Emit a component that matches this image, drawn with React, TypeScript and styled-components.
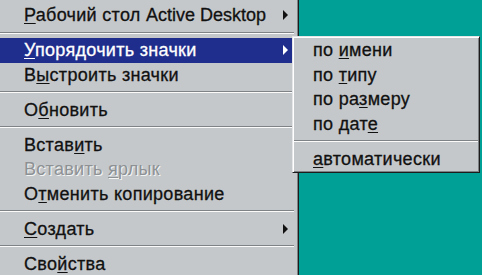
import { Fragment } from 'react'
import styled, { createGlobalStyle } from 'styled-components'

const GlobalStyle = createGlobalStyle`
  html, body {
    margin: 0;
    padding: 0;
    background: #00a096;
    overflow: hidden;
  }
`

const Desktop = styled.div`
  position: relative;
  width: 482px;
  height: 275px;
  overflow: hidden;
  background: #00a096;
  font-family: 'Liberation Sans', Arial, sans-serif;
  font-size: 18px;
  letter-spacing: 0.3px;
  color: #111111;
`

const MainMenu = styled.div`
  display: flex;
  flex-direction: column;
  width: 294px;
  margin-left: -4px;
  padding: 3px 4px 0 4px;
  box-sizing: content-box;
  background: #c5c8ca;
  border-right: 1px solid #1c1c1c;
  box-shadow: inset -1px 0 0 #7e8184;
  min-height: 290px;
`

const SubMenu = styled.div`
  position: absolute;
  left: 292px;
  top: 36px;
  width: 184px;
  display: flex;
  flex-direction: column;
  background: #c5c8ca;
  border-top: 1px solid #e4e6e7;
  border-left: 1px solid #e4e6e7;
  border-right: 1px solid #1c1c1c;
  border-bottom: 1px solid #1c1c1c;
  box-shadow: inset 1px 1px 0 #ffffff, inset -1px -1px 0 #7e8184;
  padding: 1px;
`

const Row = styled.div<{ active?: boolean; disabled?: boolean; indent: number }>`
  display: flex;
  align-items: center;
  height: 24.5px;
  padding-left: ${({ indent }) => indent}px;
  padding-right: 3px;
  white-space: nowrap;
  background: ${({ active }) => (active ? '#1f2e8c' : 'transparent')};
  color: ${({ active, disabled }) => (active ? '#ffffff' : disabled ? '#8d9194' : '#111111')};
  text-shadow: ${({ disabled }) => (disabled ? '1px 1px 0 #f4f5f5' : 'none')};
  -webkit-text-stroke: ${({ disabled }) => (disabled ? '0' : '0.3px currentColor')};
`

const Label = styled.span`
  flex: 1;
  line-height: 1;
`

// latin words run a bit narrower than the cyrillic in the original font
const Latin = styled.span`
  letter-spacing: 0;
`

const Key = styled.span`
  text-decoration: underline;
  text-underline-offset: 2px;
  text-decoration-thickness: 1px;
`

const Arrow = styled.span<{ active?: boolean }>`
  width: 0;
  height: 0;
  margin-right: 3px;
  border-top: 5px solid transparent;
  border-bottom: 5px solid transparent;
  border-left: 5px solid ${({ active }) => (active ? '#ffffff' : '#111111')};
`

const Separator = styled.div`
  height: 10.5px;
  padding-top: 4px;
  box-sizing: border-box;

  &::after {
    content: '';
    display: block;
    height: 1px;
    background: #808386;
    border-bottom: 1px solid #fbfbfb;
  }
`

type Item =
  | { sep: true }
  | {
      sep?: false
      pre: string
      key: string
      post: string
      latin?: string
      sub?: boolean
      active?: boolean
      disabled?: boolean
    }

const mainItems: Item[] = [
  { pre: '', key: 'Р', post: 'абочий стол ', latin: 'Active Desktop', sub: true },
  { sep: true },
  { pre: '', key: 'У', post: 'порядочить значки', sub: true, active: true },
  { pre: 'В', key: 'ы', post: 'строить значки' },
  { sep: true },
  { pre: 'О', key: 'б', post: 'новить' },
  { sep: true },
  { pre: 'Встав', key: 'и', post: 'ть' },
  { pre: 'Вставить ', key: 'я', post: 'рлык', disabled: true },
  { pre: 'О', key: 'т', post: 'менить копирование' },
  { sep: true },
  { pre: '', key: 'С', post: 'оздать', sub: true },
  { sep: true },
  { pre: 'Сво', key: 'й', post: 'ства' },
]

const subItems: Item[] = [
  { pre: 'по ', key: 'и', post: 'мени' },
  { pre: 'по ', key: 'т', post: 'ипу' },
  { pre: 'по ра', key: 'з', post: 'меру' },
  { pre: 'по дат', key: 'е', post: '' },
  { sep: true },
  { pre: '', key: 'а', post: 'втоматически' },
]

function renderItems(items: Item[], indent: number) {
  return items.map((item, index) => (
    <Fragment key={index}>
      {item.sep ? (
        <Separator />
      ) : (
        <Row indent={indent} active={item.active} disabled={item.disabled}>
          <Label>
            {item.pre}
            <Key>{item.key}</Key>
            {item.post}
            {item.latin && <Latin>{item.latin}</Latin>}
          </Label>
          {item.sub && <Arrow active={item.active} />}
        </Row>
      )}
    </Fragment>
  ))
}

export default function App() {
  return (
    <Desktop>
      <GlobalStyle />
      <MainMenu>{renderItems(mainItems, 24)}</MainMenu>
      <SubMenu>{renderItems(subItems, 19)}</SubMenu>
    </Desktop>
  )
}
